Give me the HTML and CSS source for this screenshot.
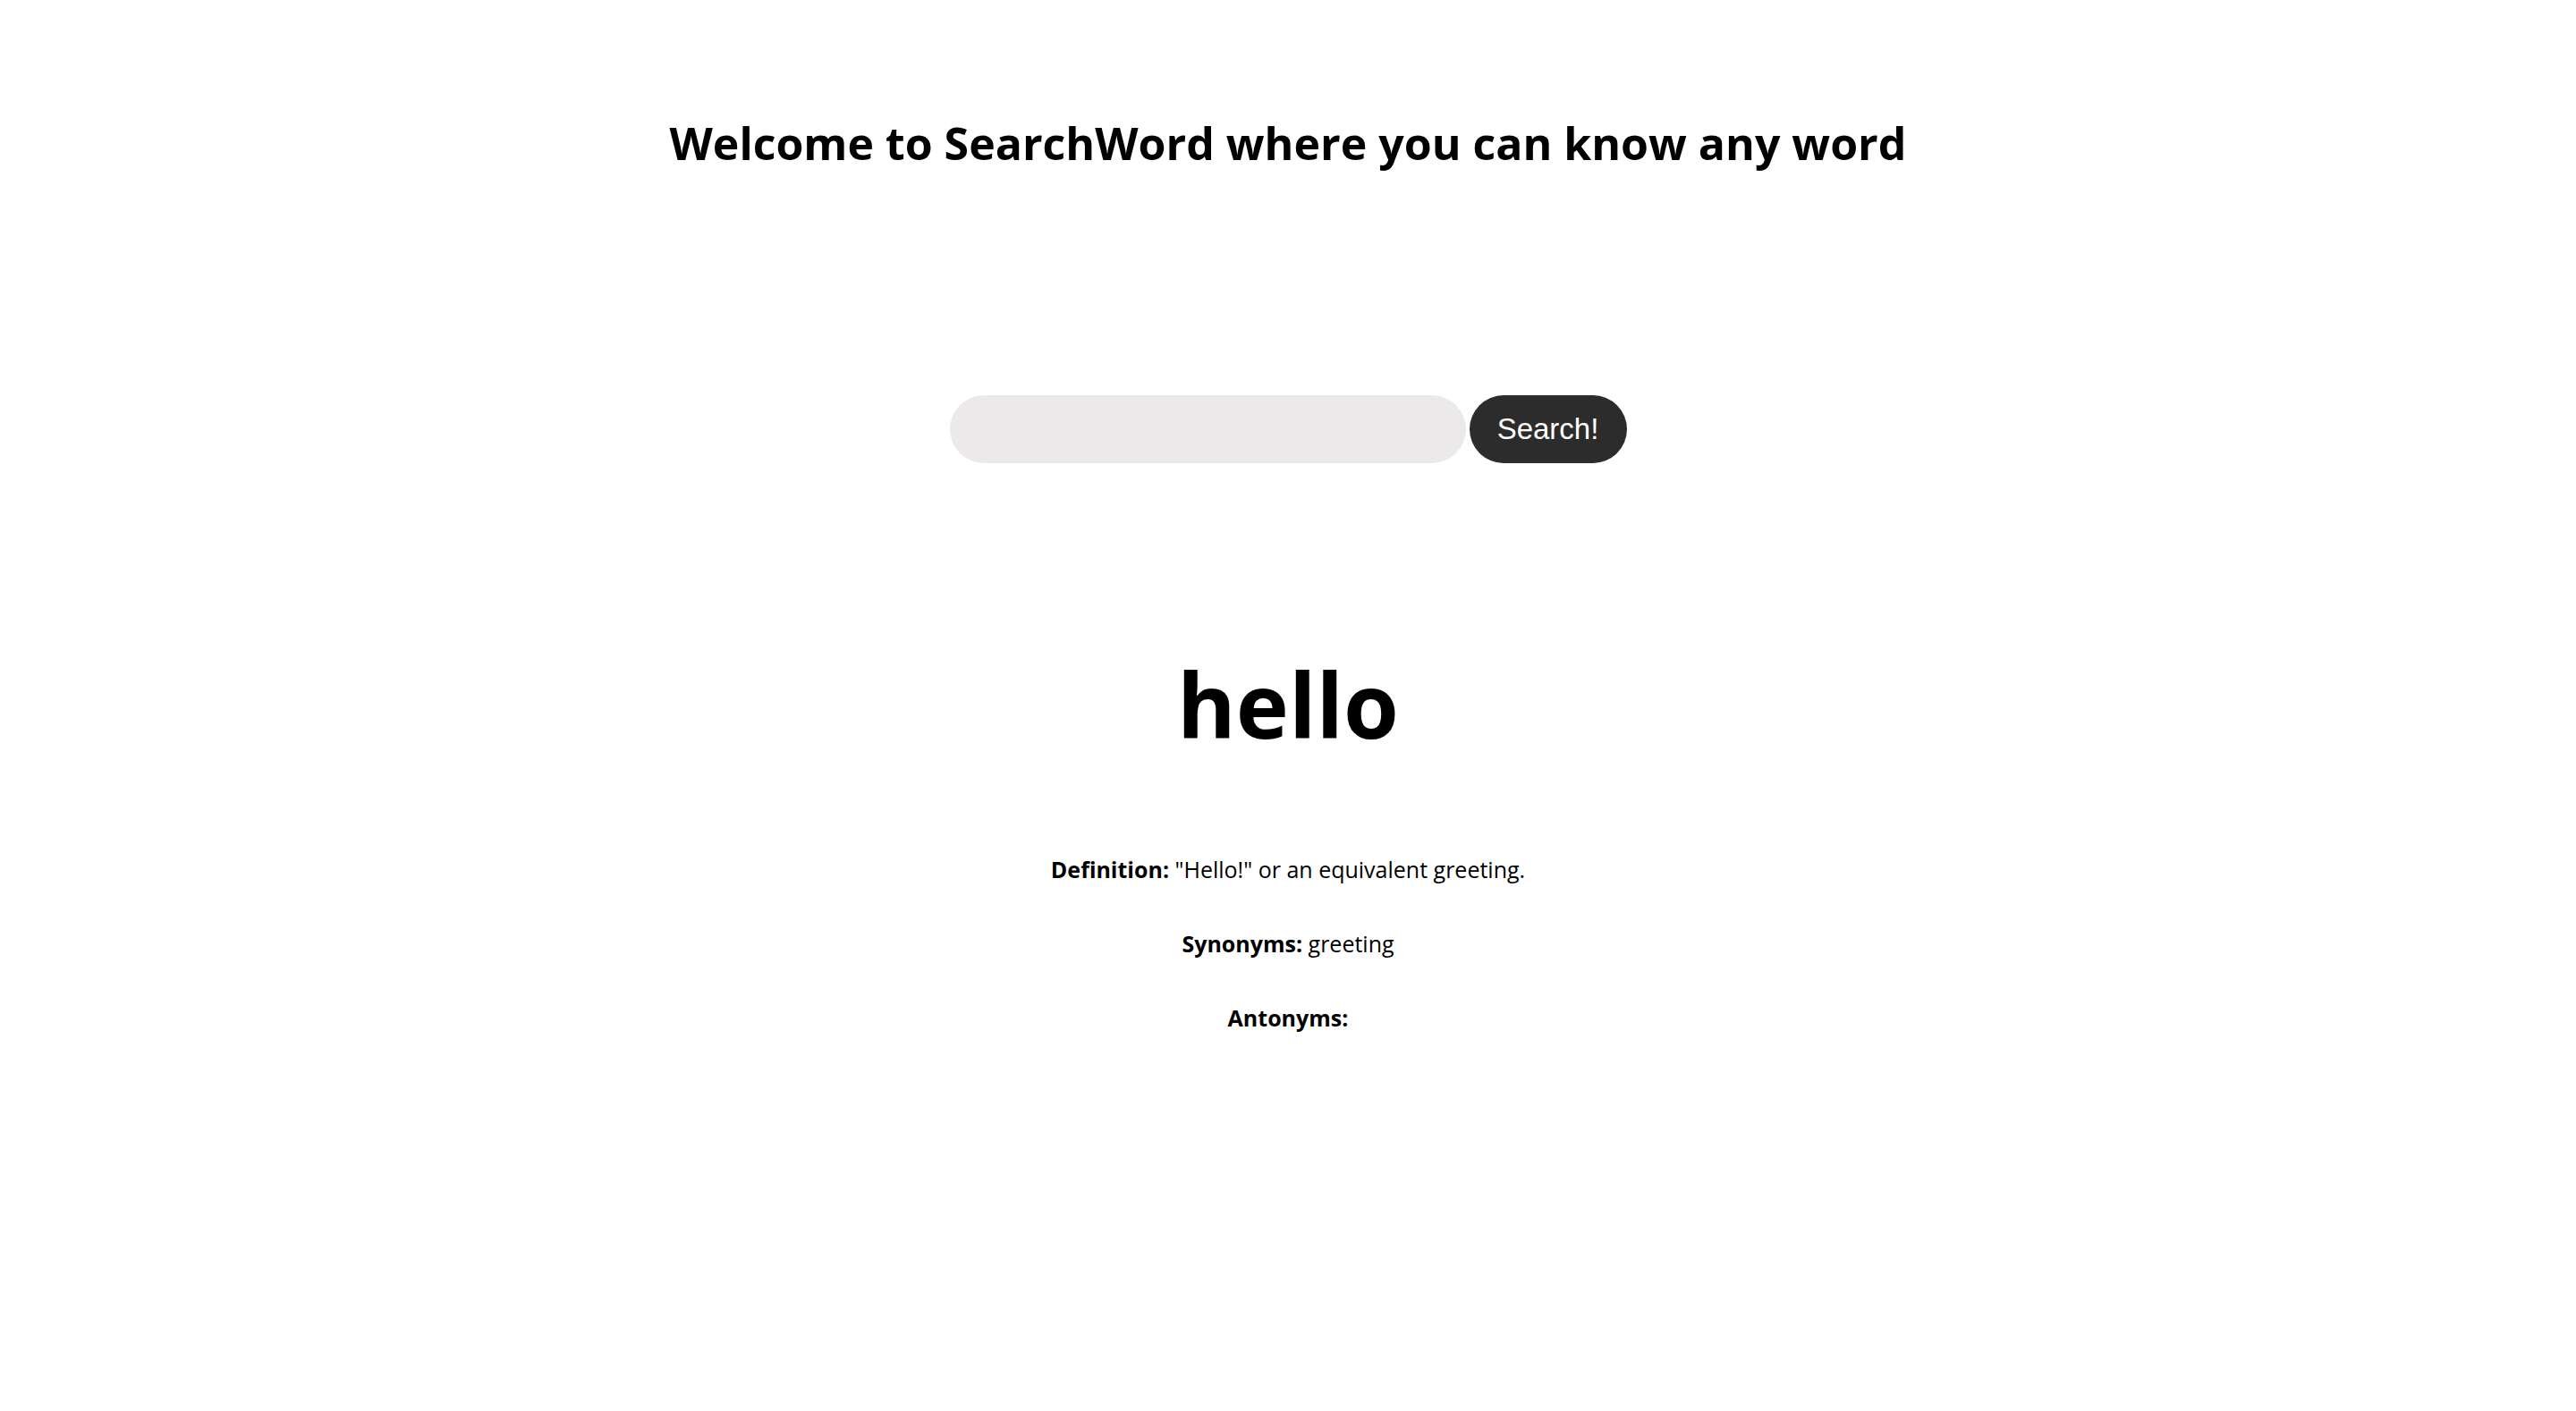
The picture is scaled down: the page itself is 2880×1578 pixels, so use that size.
FILE: index.html
```html
<!DOCTYPE html>
<html lang="en">
<head>
<meta charset="utf-8">
<title>SearchWord</title>
<link rel="stylesheet" href="styles.css">
</head>
<body>
<header class="header">
  <h1 class="title">Welcome to SearchWord where you can know any word</h1>
</header>
<form class="search" onsubmit="return false;">
  <input class="search-input" type="text" aria-label="word">
  <button class="search-button" type="submit">Search!</button>
</form>
<main class="result">
  <h2 class="word">hello</h2>
  <p class="entry"><strong>Definition:</strong> "Hello!" or an equivalent greeting.</p>
  <p class="entry"><strong>Synonyms:</strong> greeting</p>
  <p class="entry"><strong>Antonyms:</strong> </p>
</main>
</body>
</html>
```
FILE: styles.css
```css
html, body {
  margin: 0;
  padding: 0;
  background: #ffffff;
  color: #000000;
}
body {
  font-family: "Open Sans", "Noto Sans", sans-serif;
  text-align: center;
}
.header {
  padding-top: 128px;
}
.title {
  margin: 0;
  font-size: 50px;
  font-weight: 700;
  line-height: 65px;
}
.search {
  display: flex;
  justify-content: center;
  align-items: center;
  gap: 4px;
  margin-top: 249px;
}
.search-input {
  width: 577px;
  height: 76px;
  box-sizing: border-box;
  border: none;
  border-radius: 38px;
  background: #ebe9ea;
  padding: 0 30px;
  font-size: 32px;
  outline: none;
}
.search-button {
  width: 176px;
  height: 76px;
  box-sizing: border-box;
  border: none;
  border-radius: 38px;
  background: #2c2c2c;
  color: #ffffff;
  font-family: "Liberation Sans", Arial, sans-serif;
  font-size: 33px;
  padding: 0;
}
.result {
  margin-top: 198px;
}
.word {
  margin: 0;
  font-size: 100px;
  font-weight: 700;
  line-height: 142px;
}
.entry {
  margin: 0;
  font-size: 25px;
  line-height: 38px;
}
.word + .entry {
  margin-top: 95px;
}
.entry + .entry {
  margin-top: 45px;
}
```
